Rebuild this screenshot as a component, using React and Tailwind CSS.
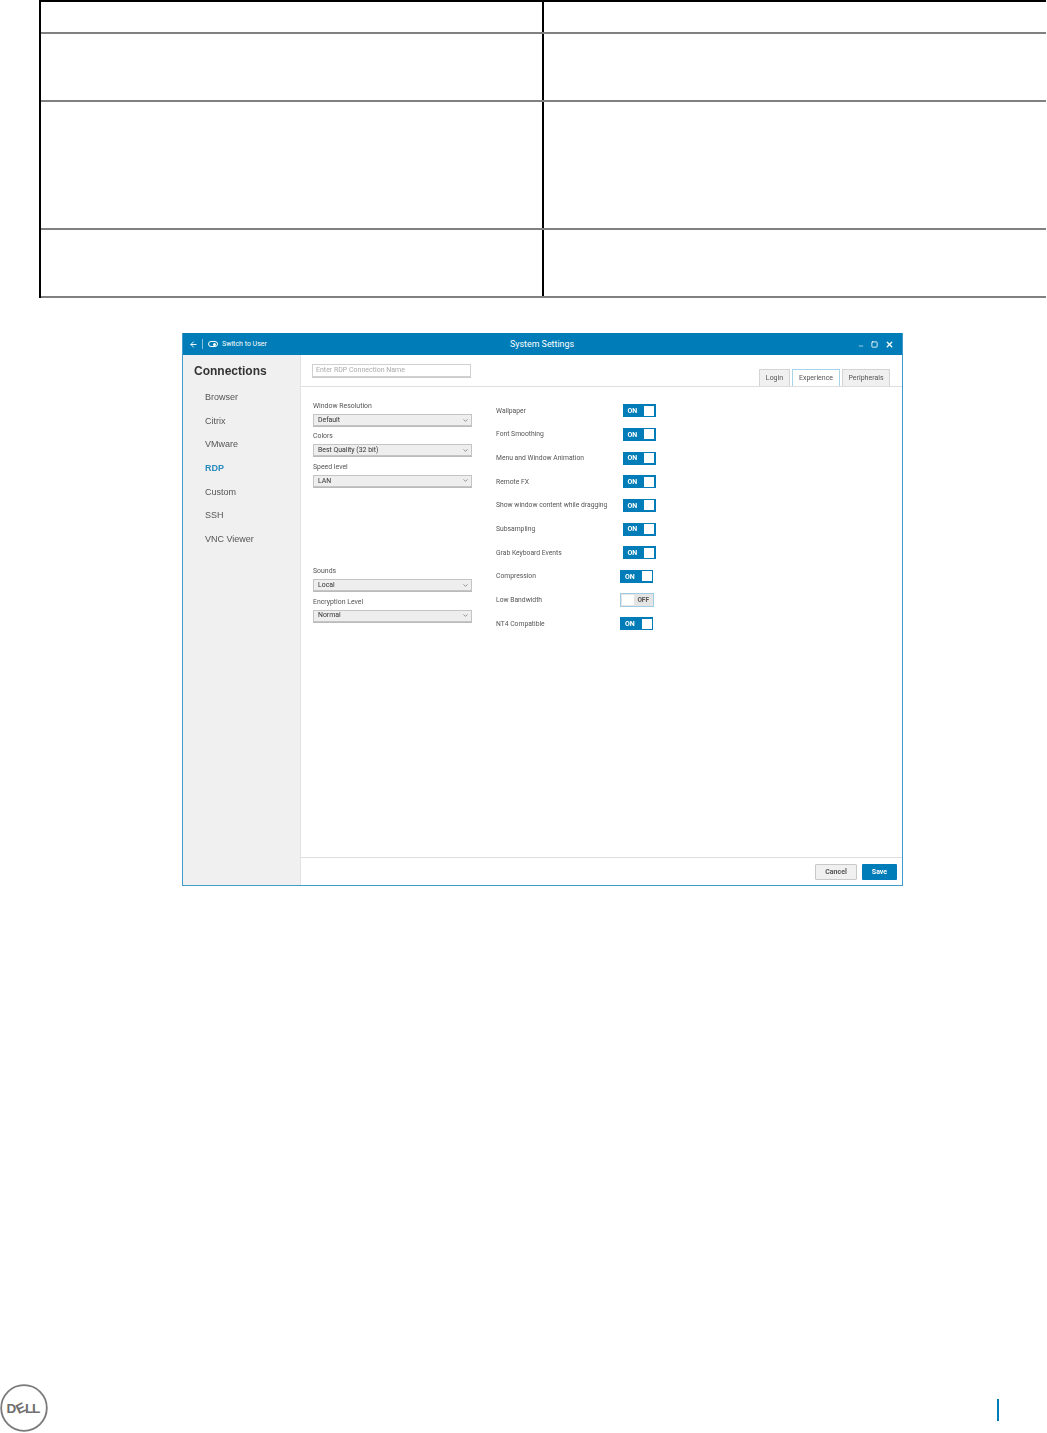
import { ArrowLeft, ChevronDown, Minus, Square, X } from "lucide-react";

const connections = ["Browser", "Citrix", "VMware", "RDP", "Custom", "SSH", "VNC Viewer"];

const experience = [
  { label: "Wallpaper", on: true, shift: false },
  { label: "Font Smoothing", on: true, shift: false },
  { label: "Menu and Window Animation", on: true, shift: false },
  { label: "Remote FX", on: true, shift: false },
  { label: "Show window content while dragging", on: true, shift: false },
  { label: "Subsampling", on: true, shift: false },
  { label: "Grab Keyboard Events", on: true, shift: false },
  { label: "Compression", on: true, shift: true },
  { label: "Low Bandwidth", on: false, shift: true },
  { label: "NT4 Compatible", on: true, shift: true },
];

function TableRow({ height }) {
  return (
    <div className={`flex border-b-2 border-[#808080] ${height}`}>
      <div className="w-[503px] border-r-2 border-black" />
      <div className="flex-1" />
    </div>
  );
}

function Field({ label, value }) {
  return (
    <div className="h-[30.4px]">
      <div className="h-[13px] text-[6.9px] leading-[13px] text-[#555]">{label}</div>
      <div className="mt-px flex h-[12px] items-center justify-between border border-[#c4c4c4] bg-[#eeeeee] pl-[4px] pr-[2px] text-[6.9px] text-[#333] shadow-[0_1px_0_#bbb]">
        <span>{value}</span>
        <ChevronDown size={7} strokeWidth={2} className="text-[#555]" />
      </div>
    </div>
  );
}

function Toggle({ on }) {
  if (!on) {
    return (
      <div className="flex h-[14px] w-[34px] items-center justify-between border border-[#9fcbe3] bg-[#e4e4e4] p-[1px] pr-[4px] text-[6.5px] font-bold text-[#555]">
        <span className="h-full w-[12px] bg-white" />
        <span className="mt-px">OFF</span>
      </div>
    );
  }
  return (
    <div className="flex h-[13px] w-[33px] items-center justify-between bg-[#007db8] p-[1.5px] pl-[5px] text-[7px] font-bold text-white">
      <span className="mt-px">ON</span>
      <span className="h-full w-[10px] bg-white" />
    </div>
  );
}

function Tab({ label, active, width }) {
  return (
    <div
      className={`flex h-[17px] items-center justify-center border border-b-0 pt-px text-[7px] text-[#555] ${width} ${
        active ? "-mb-px border-[#a8d4ea] bg-white" : "border-[#d4d4d4] bg-[#f0f0f0]"
      }`}
    >
      {label}
    </div>
  );
}

function DellLogo() {
  return (
    <svg width="48" height="48" viewBox="0 0 48 48">
      <circle cx="24" cy="24" r="22.8" fill="none" stroke="#7a7a7a" strokeWidth="1.8" />
      <g fill="#6e6e6e" fontFamily="Liberation Sans, sans-serif" fontWeight="700" fontSize="13.5">
        <text x="6.5" y="28.8">D</text>
        <text x="16" y="28.8" transform="rotate(-25 20.5 24)">E</text>
        <text x="25" y="28.8">L</text>
        <text x="32" y="28.8">L</text>
      </g>
    </svg>
  );
}

export default function App() {
  return (
    <div className="flex h-[1433px] w-[1047px] flex-col overflow-hidden bg-white font-['Liberation_Sans',sans-serif]">
      {/* Empty table at top of the page */}
      <div className="ml-[39px] w-[1007px] border-l-2 border-t-2 border-l-black border-t-black">
        <TableRow height="h-[32px]" />
        <TableRow height="h-[68px]" />
        <TableRow height="h-[128px]" />
        <TableRow height="h-[68px]" />
      </div>

      {/* Screenshot of the settings window */}
      <div className="ml-[182px] mt-[35px] flex h-[553px] w-[721px] flex-col border border-t-0 border-[#3f9bcb] blur-[0.45px]">
        <div className="flex h-[22px] items-center bg-[#007db8] pl-[6px] pr-[8px] text-white">
          <ArrowLeft size={9} strokeWidth={2.5} />
          <span className="ml-[4px] h-[10px] w-px bg-[#7fbedb]" />
          <span className="ml-[5px] flex h-[6px] w-[10px] items-center justify-end rounded-full border border-white pr-px">
            <span className="h-[3px] w-[3px] rounded-full bg-white" />
          </span>
          <span className="ml-[3px] mt-px w-[288px] pl-px font-['Roboto',sans-serif] text-[7px]">Switch to User</span>
          <span className="mt-px w-[66px] text-center font-['Roboto',sans-serif] text-[8.9px]">System Settings</span>
          <span className="ml-auto flex items-center gap-[7px]">
            <Minus size={6} strokeWidth={2.5} className="mt-[3px]" />
            <Square size={7} strokeWidth={3} />
            <X size={9} strokeWidth={3.5} />
          </span>
        </div>

        <div className="flex min-h-0 flex-1">
          <aside className="w-[118px] border-r border-[#e2e2e2] bg-[#f0f0f0] pl-[11px] pt-[8px]">
            <h2 className="h-[16px] text-[12px] font-bold leading-[16px] text-[#333]">Connections</h2>
            <ul className="ml-[11px] mt-[7px]">
              {connections.map((name) => (
                <li
                  key={name}
                  className={`h-[23.7px] text-[9px] leading-[23.7px] ${
                    name === "RDP" ? "font-bold text-[#2a8cc0]" : "text-[#555]"
                  }`}
                >
                  {name}
                </li>
              ))}
            </ul>
          </aside>

          <main className="flex flex-1 flex-col">
            <div className="flex h-[32px] items-end justify-between border-b border-[#dedede] pl-[11px] pr-[12px]">
              <div className="mb-[9px] flex h-[13px] w-[159px] items-center border border-[#d0d0d0] pl-[3px] font-['Roboto',sans-serif] text-[7px] text-[#aaa] shadow-[0_1px_0_#ccc]">
                Enter RDP Connection Name
              </div>
              <div className="flex gap-[2px] font-['Roboto',sans-serif]">
                <Tab label="Login" width="w-[31px]" />
                <Tab label="Experience" width="w-[48px]" active />
                <Tab label="Peripherals" width="w-[48px]" />
              </div>
            </div>

            <div className="flex flex-1 pl-[12px] pt-[13px] font-['Roboto',sans-serif]">
              <div className="w-[159px]">
                <Field label="Window Resolution" value="Default" />
                <Field label="Colors" value="Best Quality (32 bit)" />
                <Field label="Speed level" value="LAN" />
                <div className="h-[74px]" />
                <Field label="Sounds" value="Local" />
                <Field label="Encryption Level" value="Normal" />
              </div>

              <div className="-mt-px ml-[24px]">
                {experience.map((item) => (
                  <div key={item.label} className="flex h-[23.65px] items-center text-[6.75px] text-[#555]">
                    <span className={item.shift ? "w-[124px]" : "w-[126.5px]"}>{item.label}</span>
                    <Toggle on={item.on} />
                  </div>
                ))}
              </div>
            </div>

            <div className="flex h-[28px] items-center justify-end gap-[5px] border-t border-[#dedede] pr-[5px] font-['Roboto',sans-serif] text-[7px] font-bold">
              <button className="h-[16px] w-[42px] rounded-[1px] border border-[#c8c8c8] bg-[#f0f0f0] pt-px text-[#555]">Cancel</button>
              <button className="h-[16px] w-[35px] rounded-[1px] bg-[#007db8] pt-px text-white">Save</button>
            </div>
          </main>
        </div>
      </div>

      {/* Page footer */}
      <footer className="mt-auto flex items-start justify-between pb-px pr-[48px]">
        <DellLogo />
        <div className="mt-[15px] h-[22px] w-[2px] bg-[#007db8]" />
      </footer>
    </div>
  );
}
